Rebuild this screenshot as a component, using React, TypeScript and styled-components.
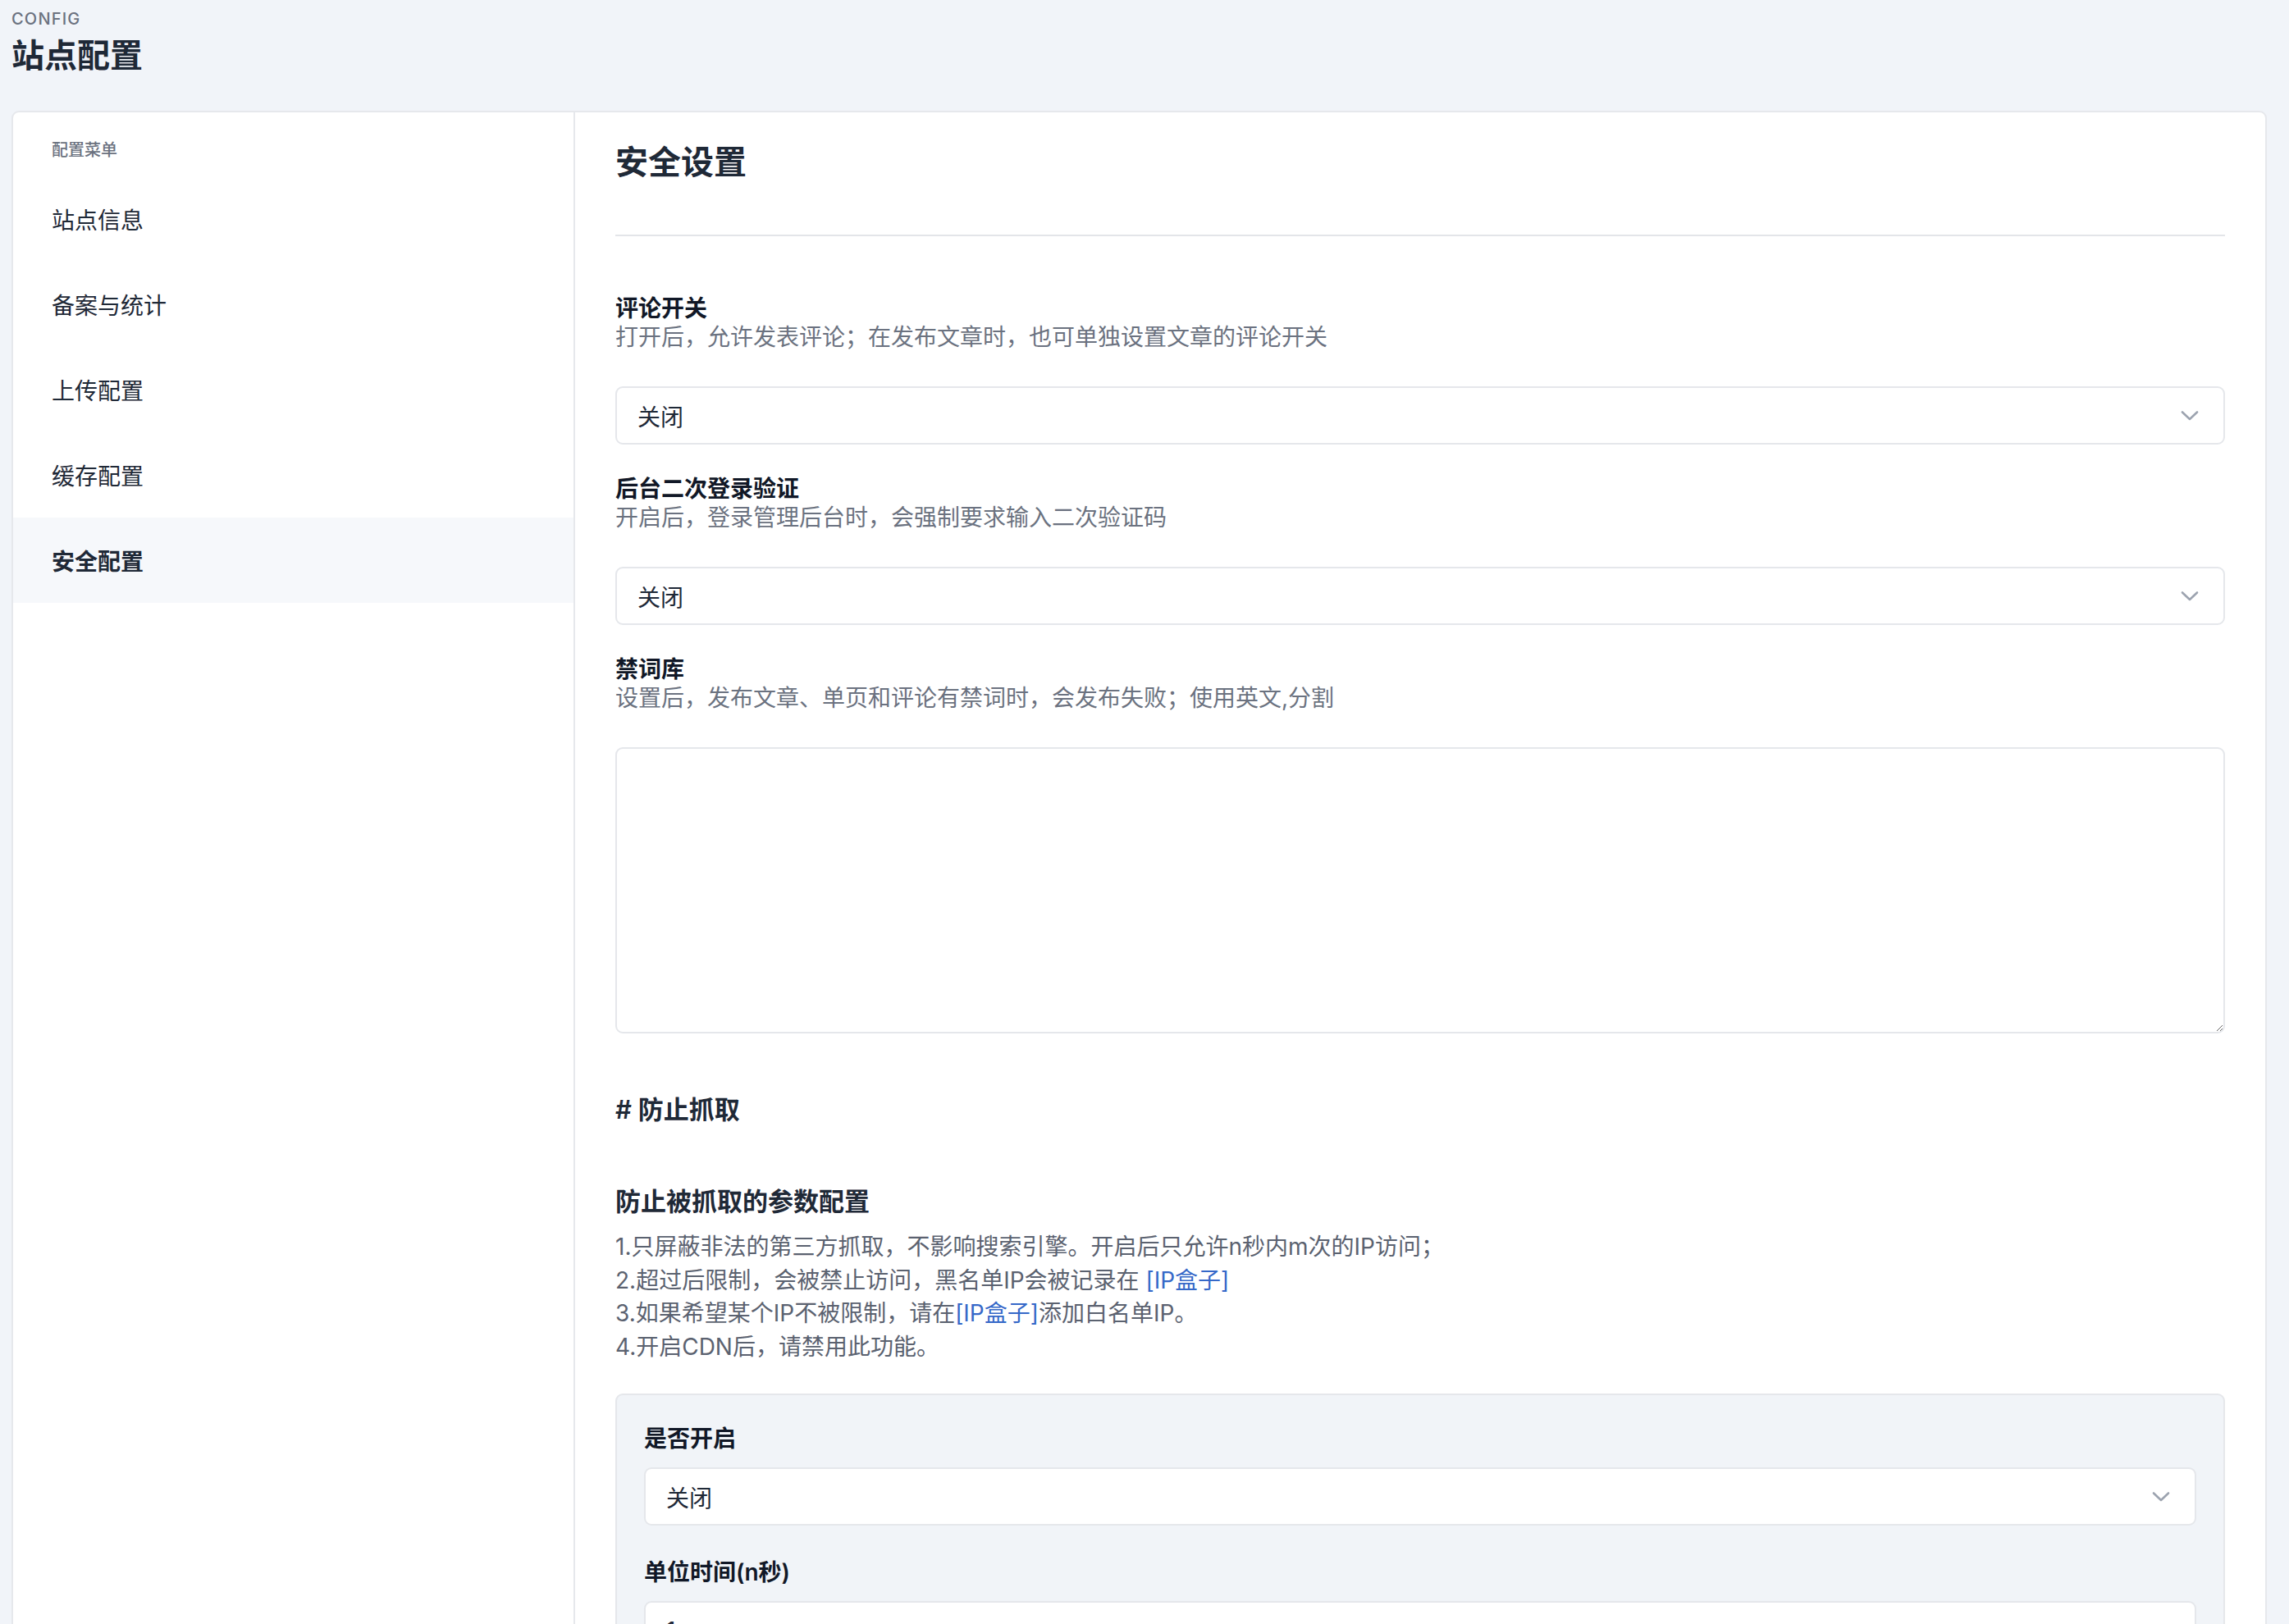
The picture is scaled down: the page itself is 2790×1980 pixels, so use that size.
import React from "react";
import styled, { createGlobalStyle } from "styled-components";

const GlobalStyle = createGlobalStyle`
  html, body {
    margin: 0;
    padding: 0;
    background: #f1f4f9;
  }
  body {
    font-family: Inter, "Noto Sans CJK SC", "Noto Sans", sans-serif;
    color: #1f2937;
  }
  * { box-sizing: border-box; }
`;

const Page = styled.div`
  padding: 9px 27px 0 14px;
  min-height: 1980px;
`;

const Header = styled.header`
  display: flex;
  flex-direction: column;
  margin-bottom: 43px;
`;

const Eyebrow = styled.div`
  font-size: 20px;
  line-height: 28px;
  letter-spacing: 1.2px;
  text-transform: uppercase;
  color: #6b7280;
  font-weight: 500;
`;

const PageTitle = styled.h1`
  margin: 7px 0 0;
  font-size: 40px;
  line-height: 48px;
  font-weight: 600;
  color: #1f2937;
`;

const Card = styled.div`
  background: #ffffff;
  border: 2px solid #e6e8ec;
  border-radius: 9px;
  display: grid;
  grid-template-columns: 685px 1fr;
  min-height: 1900px;
  overflow: hidden;
`;

const Sidebar = styled.nav`
  border-right: 2px solid #e6e8ec;
  padding-top: 32px;
  display: flex;
  flex-direction: column;
`;

const MenuLabel = styled.div`
  font-size: 20px;
  line-height: 28px;
  color: #6b7280;
  font-weight: 500;
  padding-left: 47px;
  margin-bottom: 18px;
`;

const MenuItem = styled.div<{ $active?: boolean }>`
  height: 104px;
  display: flex;
  align-items: center;
  padding-left: 47px;
  font-size: 28px;
  color: #1f2937;
  font-weight: ${(p) => (p.$active ? 600 : 400)};
  background: ${(p) => (p.$active ? "#f6f8fb" : "transparent")};
`;

const Content = styled.main`
  padding: 0 49px 60px;
  display: flex;
  flex-direction: column;
`;

const SectionTitle = styled.h2`
  margin: 0;
  padding: 33px 0 60px;
  font-size: 40px;
  line-height: 56px;
  font-weight: 600;
  color: #1f2937;
  border-bottom: 2px solid #e3e5e9;
`;

const Fields = styled.div`
  display: flex;
  flex-direction: column;
  gap: 37px;
  margin-top: 71px;
`;

const Field = styled.div`
  display: flex;
  flex-direction: column;
`;

const FieldLabel = styled.div<{ $gap?: number }>`
  font-size: 28px;
  line-height: 35px;
  font-weight: 600;
  color: #111827;
  margin-bottom: ${(p) => p.$gap ?? 0}px;
`;

const FieldDesc = styled.div`
  font-size: 28px;
  line-height: 35px;
  color: #6b7280;
  margin-bottom: 42px;
`;

const SelectBox = styled.div`
  height: 71px;
  border: 2px solid #e5e7eb;
  border-radius: 9px;
  background: #ffffff;
  display: flex;
  align-items: center;
  justify-content: space-between;
  padding: 0 30px 0 25px;
  font-size: 28px;
  color: #1f2937;
`;

const InputBox = styled.div`
  height: 71px;
  border: 2px solid #e5e7eb;
  border-radius: 9px;
  background: #ffffff;
  display: flex;
  align-items: center;
  padding: 0 25px;
  font-size: 28px;
  color: #1f2937;
`;

const TextArea = styled.textarea`
  height: 349px;
  border: 2px solid #e5e7eb;
  border-radius: 9px;
  background: #ffffff;
  resize: vertical;
  font-family: inherit;
  font-size: 28px;
  padding: 20px 25px;
  outline: none;
`;

const Heading = styled.h3`
  margin: 71px 0 0;
  font-size: 31px;
  line-height: 44px;
  font-weight: 600;
  color: #1f2937;
`;

const SubHeading = styled.h4`
  margin: 68px 0 0;
  font-size: 31px;
  line-height: 44px;
  font-weight: 600;
  color: #1f2937;
`;

const NoteList = styled.div`
  margin-top: 13px;
  display: flex;
  flex-direction: column;
`;

const NoteLine = styled.div`
  font-size: 28px;
  line-height: 40.5px;
  color: #5b6270;
`;

const Link = styled.a`
  color: #3568c8;
  text-decoration: none;
`;

const Panel = styled.div`
  margin-top: 37px;
  background: #f1f4f8;
  border: 2px solid #e5e7eb;
  border-radius: 9px;
  padding: 36px 33px 40px;
  display: flex;
  flex-direction: column;
  gap: 40px;
`;

const Chevron = () => (
  <svg width="22" height="14" viewBox="0 0 22 14" fill="none">
    <path d="M2 2.5 L11 11 L20 2.5" stroke="#9ca3af" strokeWidth="2.6" strokeLinecap="round" strokeLinejoin="round" />
  </svg>
);

const Select = ({ value }: { value: string }) => (
  <SelectBox>
    <span>{value}</span>
    <Chevron />
  </SelectBox>
);

const menu = ["站点信息", "备案与统计", "上传配置", "缓存配置", "安全配置"];

export default function App() {
  return (
    <>
      <GlobalStyle />
      <Page>
        <Header>
          <Eyebrow>Config</Eyebrow>
          <PageTitle>站点配置</PageTitle>
        </Header>
        <Card>
          <Sidebar>
            <MenuLabel>配置菜单</MenuLabel>
            {menu.map((m) => (
              <MenuItem key={m} $active={m === "安全配置"}>
                {m}
              </MenuItem>
            ))}
          </Sidebar>
          <Content>
            <SectionTitle>安全设置</SectionTitle>
            <Fields>
              <Field>
                <FieldLabel>评论开关</FieldLabel>
                <FieldDesc>打开后，允许发表评论；在发布文章时，也可单独设置文章的评论开关</FieldDesc>
                <Select value="关闭" />
              </Field>
              <Field>
                <FieldLabel>后台二次登录验证</FieldLabel>
                <FieldDesc>开启后，登录管理后台时，会强制要求输入二次验证码</FieldDesc>
                <Select value="关闭" />
              </Field>
              <Field>
                <FieldLabel>禁词库</FieldLabel>
                <FieldDesc>设置后，发布文章、单页和评论有禁词时，会发布失败；使用英文,分割</FieldDesc>
                <TextArea />
              </Field>
            </Fields>
            <Heading># 防止抓取</Heading>
            <SubHeading>防止被抓取的参数配置</SubHeading>
            <NoteList>
              <NoteLine>1.只屏蔽非法的第三方抓取，不影响搜索引擎。开启后只允许n秒内m次的IP访问；</NoteLine>
              <NoteLine>
                2.超过后限制，会被禁止访问，黑名单IP会被记录在 <Link href="#">[IP盒子]</Link>
              </NoteLine>
              <NoteLine>
                3.如果希望某个IP不被限制，请在<Link href="#">[IP盒子]</Link>添加白名单IP。
              </NoteLine>
              <NoteLine>4.开启CDN后，请禁用此功能。</NoteLine>
            </NoteList>
            <Panel>
              <Field>
                <FieldLabel $gap={17}>是否开启</FieldLabel>
                <Select value="关闭" />
              </Field>
              <Field>
                <FieldLabel $gap={17}>单位时间(n秒)</FieldLabel>
                <InputBox>1</InputBox>
              </Field>
            </Panel>
          </Content>
        </Card>
      </Page>
    </>
  );
}
